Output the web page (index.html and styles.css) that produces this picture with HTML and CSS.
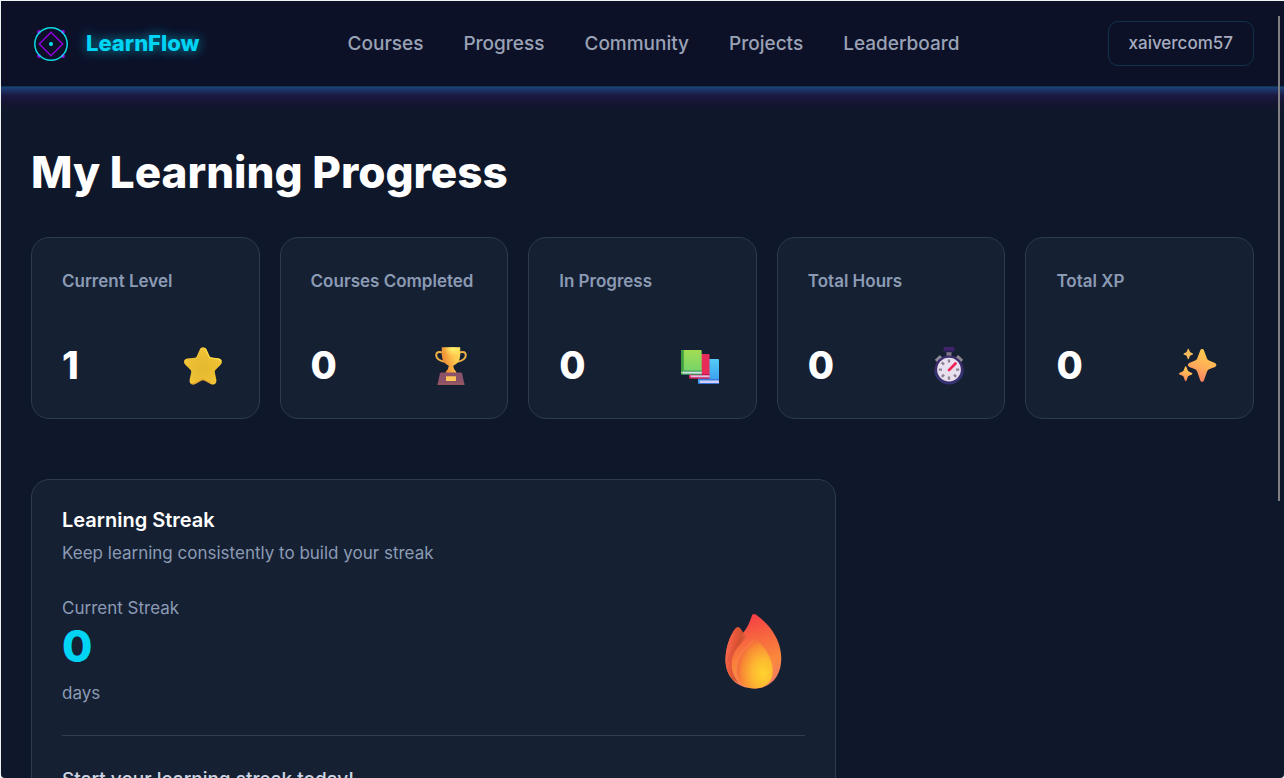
FILE: index.html
```html
<!DOCTYPE html>
<html lang="en">
<head>
  <meta charset="utf-8">
  <meta name="viewport" content="width=device-width, initial-scale=1">
  <title>LearnFlow - My Learning Progress</title>
  <link rel="stylesheet" href="styles.css">
</head>
<body>
<div class="window">
  <div class="page">
    <header class="header">
      <a class="brand" href="#">
        <svg class="brand-mark" viewBox="0 0 40 40" fill="none" aria-hidden="true">
          <g fill="#9d00e8">
            <circle cx="8" cy="8" r="1.9"/><circle cx="32" cy="8" r="1.9"/>
            <circle cx="8" cy="32" r="1.9"/><circle cx="32" cy="32" r="1.9"/>
          </g>
          <circle cx="20" cy="20" r="16.2" stroke="#0bdbe4" stroke-width="1.5"/>
          <path d="M20 8.3 31.7 20 20 31.7 8.3 20Z" stroke="#9200da" stroke-width="1.5"/>
          <circle cx="20" cy="20" r="2" fill="#0be3ee"/>
        </svg>
        <span>LearnFlow</span>
      </a>
      <nav class="nav">
        <a href="#">Courses</a>
        <a href="#">Progress</a>
        <a href="#">Community</a>
        <a href="#">Projects</a>
        <a href="#">Leaderboard</a>
      </nav>
      <button class="user" type="button">xaivercom57</button>
    </header>

    <main class="main">
      <h1>My Learning Progress</h1>

      <section class="stats">
        <div class="card">
          <h3>Current Level</h3>
          <div class="stat-row">
            <span class="value">1</span>
            <svg class="emoji" viewBox="0 0 52 40" aria-hidden="true">
              <defs>
                <radialGradient id="star" cx=".5" cy=".55" r=".55">
                  <stop offset="0" stop-color="#e3b82f"/><stop offset=".7" stop-color="#edc033"/><stop offset="1" stop-color="#f9c83a"/>
                </radialGradient>
              </defs>
              <path d="M22.8 3.6C24 .6 28 .6 29.3 3.6L32.2 10.3Q32.7 11.5 34 11.7L41.6 12.6C45 13 46 16.4 43.6 18.8L38.4 24Q37.5 25 37.8 26.3L39.3 33.5C40 37.3 37 39.8 33.6 38L27.4 34.6Q26 33.9 24.6 34.6L18.4 38C15 39.8 12 37.3 12.7 33.5L14.2 26.3Q14.5 25 13.6 24L8.4 18.8C6 16.4 7 13 10.4 12.6L18 11.7Q19.3 11.5 19.8 10.3Z" fill="url(#star)"/>
              <path d="M27.8 2.6Q28.8 3 29.8 5.6L32.2 11Q33 12 35 12.2L41.8 13.2Q43.6 13.8 43.8 15.4" fill="none" stroke="#ffdf45" stroke-width="1.3"/>
              <path d="M13.8 37Q15 38.6 18.8 36.8L25.8 33.4 33.6 37" fill="none" stroke="#d38b2f" stroke-width="1.2" opacity=".6"/>
            </svg>
          </div>
        </div>
        <div class="card">
          <h3>Courses Completed</h3>
          <div class="stat-row">
            <span class="value">0</span>
            <svg class="emoji" viewBox="0 0 52 40" aria-hidden="true">
              <defs>
                <linearGradient id="cup" x1="0" y1=".6" x2="1" y2=".2">
                  <stop offset="0" stop-color="#e98332"/><stop offset=".6" stop-color="#ffc24a"/><stop offset="1" stop-color="#ffdd5a"/>
                </linearGradient>
                <radialGradient id="shine" cx=".6" cy=".05" r=".45">
                  <stop offset="0" stop-color="#fff36c"/><stop offset="1" stop-color="#fff36c" stop-opacity="0"/>
                </radialGradient>
              </defs>
              <path d="M18 6.5Q11 4.5 11.2 9.5 11.6 14 19.5 15.8M34 6.5Q41 4.5 40.8 9.5 40.4 14 32.5 15.8" fill="none" stroke="#efb045" stroke-width="2"/>
              <path d="M16.8 1.2H35.2V9Q34.8 17.2 28.2 19.7 28.4 23.2 31.2 25.8V27H20.8V25.8Q23.6 23.2 23.8 19.7 17.2 17.2 16.8 9Z" fill="url(#cup)"/>
              <path d="M16.8 1.2H35.2V9Q34.8 17.2 28.2 19.7H23.8Q17.2 17.2 16.8 9Z" fill="url(#shine)"/>
              <path d="M16.2 26.5H35.8Q36.8 26.5 37.1 27.5L39.5 38.7H12.5L14.9 27.5Q15.2 26.5 16.2 26.5Z" fill="#8c5267"/>
              <path d="M12.7 38.1H39.3" stroke="#a95e61" stroke-width="1.2"/>
              <rect x="21" y="30.3" width="10" height="4.6" rx=".6" fill="#ffc45a"/>
            </svg>
          </div>
        </div>
        <div class="card">
          <h3>In Progress</h3>
          <div class="stat-row">
            <span class="value">0</span>
            <svg class="emoji" viewBox="0 0 52 40" aria-hidden="true">
              <defs>
                <linearGradient id="green" x1="0" y1="0" x2="0" y2="1"><stop offset="0" stop-color="#a2dc53"/><stop offset="1" stop-color="#6fd36d"/></linearGradient>
                <linearGradient id="blue" x1="0" y1="0" x2="0" y2="1"><stop offset="0" stop-color="#54cbf5"/><stop offset="1" stop-color="#3798ee"/></linearGradient>
              </defs>
              <rect x="24" y="13" width="21" height="25" rx="1" fill="url(#blue)"/>
              <path d="M25.5 34.5H45V37H26Z" fill="#d5cdf3"/>
              <path d="M25 33.6H45M25 37.5H45" stroke="#3476db" stroke-width="1"/>
              <rect x="15" y="8" width="20.5" height="24.6" rx="1" fill="#e82c59"/>
              <path d="M16.5 29.3H35.5V31.6H17Z" fill="#d7bfe6"/>
              <path d="M16 28.6H35.5M16 32.1H35.5" stroke="#bd164e" stroke-width="1"/>
              <rect x="7" y="4" width="20.7" height="24.5" rx="1" fill="url(#green)"/>
              <path d="M8 4H9.8V24.5L7 26V5Q7 4 8 4Z" fill="#419d42"/>
              <path d="M8.5 25.7H27.7V27.8H9Z" fill="#d5e1ed"/>
              <path d="M8.5 25H27.7M8 28.2H27.7" stroke="#368b60" stroke-width=".9"/>
            </svg>
          </div>
        </div>
        <div class="card">
          <h3>Total Hours</h3>
          <div class="stat-row">
            <span class="value">0</span>
            <svg class="emoji" viewBox="-1 0 52 40" aria-hidden="true">
              <rect x="23.5" y="5" width="5" height="6" fill="#7d7687"/>
              <rect x="20.6" y="1" width="10.8" height="5.2" rx="1" fill="#41246b"/>
              <path d="M20.8 5.2H31.2" stroke="#292058" stroke-width="1.5"/>
              <path d="M13.2 15.2 18.3 10.5M38.8 15.2 33.7 10.5" stroke="#8d8994" stroke-width="4.2"/>
              <circle cx="26" cy="24" r="14.6" fill="#3e2d6c"/>
              <path d="M12 25A14.1 14.1 0 0 0 40 25" fill="none" stroke="#2c3b77" stroke-width="1.3"/>
              <circle cx="26" cy="23.6" r="11.9" fill="#e8e0ee"/>
              <g stroke="#8e8395" stroke-width="2.4">
                <path d="M26 13.4V16.6M26 30.6V33.8M15.8 23.6H19M33 23.6H36.2M18.8 16.4 21 18.6M31 28.6 33.2 30.8M18.8 30.8 21 28.6"/>
              </g>
              <path d="M26 24.1 32.5 17.5" stroke="#ef2257" stroke-width="2.7" stroke-linecap="round"/>
            </svg>
          </div>
        </div>
        <div class="card">
          <h3>Total XP</h3>
          <div class="stat-row">
            <span class="value">0</span>
            <svg class="emoji" viewBox="-1 0 52 40" aria-hidden="true">
              <defs>
                <linearGradient id="spark" x1=".7" y1="0" x2=".3" y2="1"><stop offset="0" stop-color="#ffce4d"/><stop offset=".55" stop-color="#ffad58"/><stop offset="1" stop-color="#fa7b65"/></linearGradient>
              </defs>
              <g fill="url(#spark)">
                <path d="M28.3 4.2C29 2.6 31.2 2.6 31.9 4.2L35 12.6Q35.6 14 37 14.6L43 17Q45.8 19 43 21L37 23.3Q35.6 24 35 25.4L31.9 34.5C31.2 36.2 29 36.2 28.3 34.5L25.2 25.4Q24.6 24 23.2 23.3L17.2 21Q14.4 19 17.2 17L23.2 14.6Q24.6 14 25.2 12.6Z"/>
                <path d="M13 20.7Q13.7 19.8 14.4 20.7L15.8 24.6Q16.1 25.3 16.8 25.6L20 27Q20.8 27.7 20 28.4L16.8 29.8Q16.1 30.1 15.8 30.8L14.4 34.8Q13.7 35.7 13 34.8L11.6 30.8Q11.3 30.1 10.6 29.8L7.4 28.4Q6.6 27.7 7.4 27L10.6 25.6Q11.3 25.3 11.6 24.6Z"/>
              </g>
              <path d="M15.7 3.2Q16.3 2.5 16.9 3.2L18 6.1 20.8 7.4Q21.6 8 20.8 8.6L18 9.8 16.9 12.8Q16.3 13.5 15.7 12.8L14.6 9.8 11.8 8.6Q11 8 11.8 7.4L14.6 6.1Z" fill="#f6bb5b"/>
            </svg>
          </div>
        </div>
      </section>

      <div class="columns">
        <section class="card streak">
          <h2>Learning Streak</h2>
          <p class="hint">Keep learning consistently to build your streak</p>
          <div class="streak-row">
            <div>
              <p>Current Streak</p>
              <strong class="count">0</strong>
              <p>days</p>
            </div>
            <svg class="flame" viewBox="1 0 104 80" aria-hidden="true">
              <defs>
                <linearGradient id="fire" x1=".45" y1="0" x2=".65" y2="1"><stop offset="0" stop-color="#f53b46"/><stop offset=".3" stop-color="#f76340"/><stop offset=".65" stop-color="#fa883b"/><stop offset="1" stop-color="#f47a68"/></linearGradient>
                <linearGradient id="side" x1="0" y1=".2" x2="1" y2=".6"><stop offset="0" stop-color="#fb6c57"/><stop offset=".4" stop-color="#e65738"/><stop offset=".65" stop-color="#cf5130"/><stop offset="1" stop-color="#f26c3f" stop-opacity="0"/></linearGradient>
                <radialGradient id="core" cx=".74" cy=".7" r=".72"><stop offset="0" stop-color="#ffd32d"/><stop offset=".4" stop-color="#fdb931"/><stop offset=".8" stop-color="#f88b35"/><stop offset="1" stop-color="#f4673c"/></radialGradient>
              </defs>
              <path d="M52.2 3.8Q54 2 56.5 4C69 13 79.5 27 81 43 83 62 73 77.5 54 77.5 36 77.5 25 65 25.5 48 26 36 29.5 25.5 35.3 17.8Q37.5 15 40 17.3L43.2 21.7Q48.8 15.2 52.2 3.8Z" fill="url(#fire)"/>
              <path d="M35.3 17.8Q37.5 15 40 17.3L43.2 21.7 46 27C40 34 34 38 32 50 31 60 34 67 40 73 29 68 25.5 58 25.5 48 26 36 29.5 25.5 35.3 17.8Z" fill="url(#side)"/>
              <path d="M46 24C39 33 32 36 28.5 50" fill="none" stroke="#c54b30" stroke-width="3" opacity=".25"/>
              <path d="M54.7 27.5C66 36 73.5 49 72.7 62 72 72 64.5 77.4 54 77.4 43 77.4 36 70 36 59 36.5 46 44 37 54.7 27.5Z" fill="url(#core)"/>
              <path d="M54 28.5C44 38 36.7 46 36.5 59 36.5 67 40 73 46 75.5" fill="none" stroke="#ffa45b" stroke-width="1" opacity=".5"/>
            </svg>
          </div>
          <p class="callout">Start your learning streak today!</p>
        </section>
      </div>
    </main>
  </div>
  <div class="scroll-thumb"></div>
</div>
</body>
</html>
```
FILE: styles.css
```css
* { box-sizing: border-box; }
body {
  margin: 0;
  background: #eef2f3;
  color: #fff;
  font-family: Inter, "Liberation Sans", sans-serif;
  font-size: 17px;
  line-height: 25px;
}
h1, h2, h3, p { margin: 0; }
a { color: inherit; text-decoration: none; }

.window {
  position: relative;
  height: 100vh;
  padding: 1px 0 0 1px;
}
.page {
  height: 100%;
  overflow-y: auto;
  scrollbar-width: none;
  background: #0f172a;
  border-radius: 0 0 4px 4px;
}
.scroll-thumb {
  position: absolute;
  top: 16px;
  right: 4px;
  width: 2px;
  height: 485px;
  background: #808084;
}

/* header */
.header {
  position: relative;
  display: flex;
  align-items: center;
  justify-content: space-between;
  padding: 20px 30px;
  background: #0c1128;
  border-bottom: 1px solid #0e3850;
}
.header::after {
  content: "";
  position: absolute;
  left: 0;
  right: 0;
  top: calc(100% + 1px);
  height: 24px;
  background: linear-gradient(#1d4278, #1c2f60 4px, #1b1b43 8px, #18163a 12px, #13162f 17px, #0f172a);
}
.brand {
  display: flex;
  align-items: center;
  gap: 15px;
  color: #00d4f5;
  font-size: 22px;
  font-weight: 800;
  line-height: 27px;
  text-shadow: 0 0 12px rgba(0, 212, 245, .7);
}
.brand-mark { width: 40px; height: 40px; }
.nav {
  display: flex;
  gap: 40px;
  color: #9aa2b5;
  font-size: 19px;
  font-weight: 500;
  line-height: 26px;
}
.user {
  padding: 9px 20px;
  border: 1px solid #0d344c;
  border-radius: 10px;
  background: transparent;
  color: #a6adbf;
  font: 500 17px/25px Inter, "Liberation Sans", sans-serif;
}

/* content */
.main { padding: 60px 30px; }
h1 {
  margin-bottom: 40px;
  font-size: 44px;
  font-weight: 800;
  line-height: 50px;
}
.card {
  padding: 30px;
  background: #162033;
  border: 1px solid #2c3b4f;
  border-radius: 18px;
}
.stats {
  display: grid;
  grid-template-columns: repeat(5, 1fr);
  gap: 20px;
  margin-bottom: 60px;
}
.stats h3 {
  margin-bottom: 48px;
  color: #8b9bb4;
  font-size: 17px;
  font-weight: 600;
  line-height: 27px;
  white-space: nowrap;
}
.stat-row {
  display: flex;
  align-items: center;
  justify-content: space-between;
  height: 45px;
}
.value {
  font-size: 38px;
  font-weight: 800;
}
.emoji { width: 52px; height: 40px; }

.columns {
  display: grid;
  grid-template-columns: repeat(3, 1fr);
  gap: 30px;
}
.streak {
  grid-column: span 2;
  color: #8b9bb4;
}
.streak h2 {
  margin-bottom: 10px;
  color: #fff;
  font-size: 20px;
  font-weight: 600;
  line-height: 21px;
}
.streak-row {
  display: flex;
  align-items: center;
  justify-content: space-between;
  padding: 30px 0 29px;
  border-bottom: 1px solid #2f3e52;
}
.count {
  display: block;
  margin-bottom: 10px;
  color: #00d4f5;
  font-size: 44px;
  font-weight: 800;
  line-height: 50px;
}
.flame { width: 104px; height: 80px; }
.callout {
  padding-top: 30px;
  color: #cbd5e1;
  font-size: 19px;
  font-weight: 500;
  line-height: 28px;
}
```
